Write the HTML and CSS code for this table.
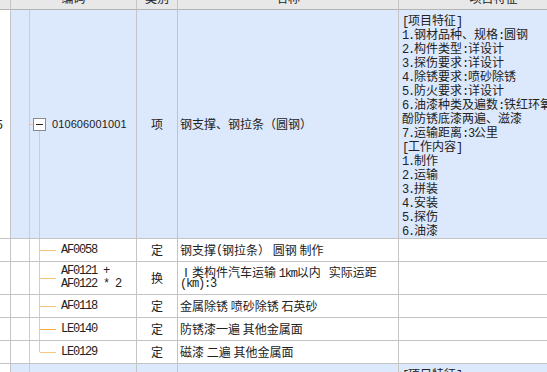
FILE: index.html
```html
<!DOCTYPE html>
<html lang="zh-CN">
<head>
<meta charset="utf-8">
<title>清单</title>
<link rel="stylesheet" href="styles.css">
</head>
<body>
<div class="sheet">
  <div class="c hd"></div>
  <div class="c hd">编码</div>
  <div class="c hd">类别</div>
  <div class="c hd">名称</div>
  <div class="c hd">项目特征</div>

  <div class="c num">5</div>
  <div class="c code code-main bl"><span class="toggle"><span class="minus"></span></span><span class="qd">010606001001</span></div>
  <div class="c type bl">项</div>
  <div class="c name bl">钢支撑、钢拉条（圆钢）</div>
  <div class="c feat bl">
    <div class="ln"><span class="en">[</span>项目特征<span class="en">]</span></div>
    <div class="ln"><span class="en">1.</span>钢材品种、规格<span class="en">:</span>圆钢</div>
    <div class="ln"><span class="en">2.</span>构件类型<span class="en">:</span>详设计</div>
    <div class="ln"><span class="en">3.</span>探伤要求<span class="en">:</span>详设计</div>
    <div class="ln"><span class="en">4.</span>除锈要求<span class="en">:</span>喷砂除锈</div>
    <div class="ln"><span class="en">5.</span>防火要求<span class="en">:</span>详设计</div>
    <div class="ln"><span class="en">6.</span>油漆种类及遍数<span class="en">:</span>铁红环氧</div>
    <div class="ln">酚防锈底漆两遍、滋漆</div>
    <div class="ln"><span class="en">7.</span>运输距离<span class="en">:3</span>公里</div>
    <div class="ln"><span class="en">[</span>工作内容<span class="en">]</span></div>
    <div class="ln"><span class="en">1.</span>制作</div>
    <div class="ln"><span class="en">2.</span>运输</div>
    <div class="ln"><span class="en">3.</span>拼装</div>
    <div class="ln"><span class="en">4.</span>安装</div>
    <div class="ln"><span class="en">5.</span>探伤</div>
    <div class="ln"><span class="en">6.</span>油漆</div>
  </div>

  <div class="c num"></div>
  <div class="c code code-sub"><span class="en">AF0058</span></div>
  <div class="c type">定</div>
  <div class="c name">钢支撑<span class="en">(</span>钢拉条） 圆钢 制作</div>
  <div class="c feat"></div>

  <div class="c num"></div>
  <div class="c code code-sub two"><span class="ln2 en">AF0121 +</span><span class="ln2 en">AF0122 * 2</span></div>
  <div class="c type">换</div>
  <div class="c name two"><span class="ln2">Ⅰ类构件汽车运输 <span class="en">1km</span>以内&nbsp;&nbsp;&nbsp;实际运距</span><span class="ln2 en">(km):3</span></div>
  <div class="c feat"></div>

  <div class="c num"></div>
  <div class="c code code-sub"><span class="en">AF0118</span></div>
  <div class="c type">定</div>
  <div class="c name">金属除锈 喷砂除锈 石英砂</div>
  <div class="c feat"></div>

  <div class="c num"></div>
  <div class="c code code-sub hot"><span class="en">LE0140</span></div>
  <div class="c type">定</div>
  <div class="c name">防锈漆一遍 其他金属面</div>
  <div class="c feat"></div>

  <div class="c num"></div>
  <div class="c code code-sub last"><span class="en">LE0129</span></div>
  <div class="c type">定</div>
  <div class="c name">磁漆 二遍 其他金属面</div>
  <div class="c feat"></div>

  <div class="c num"></div>
  <div class="c code code-next bl"></div>
  <div class="c type bl"></div>
  <div class="c name bl"></div>
  <div class="c feat bl"><div class="ln"><span class="en">[</span>项目特征<span class="en">]</span></div></div>
</div>
</body>
</html>
```

FILE: styles.css
```css
html, body {
  margin: 0;
  padding: 0;
  background: #ffffff;
  overflow: hidden;
}

body {
  font-family: "Noto Sans CJK SC", "Noto Sans", sans-serif;
  font-size: 12px;
  color: #222222;
}

.sheet {
  display: grid;
  grid-template-columns: 11px 126px 41px 221px 190px;
  grid-template-rows: 24px 229px 23px 33px 23px 23px 23px 30px;
  width: 612px;
  margin-top: -14px;
}

.c {
  box-sizing: border-box;
  border-right: 1px solid #c4c4c4;
  border-bottom: 1px solid #c4c4c4;
  background: #ffffff;
  white-space: nowrap;
  overflow: hidden;
  line-height: 14px;
}

.hd {
  background: #e8e8e8;
  border-bottom-color: #b4b4b4;
  display: flex;
  align-items: center;
  justify-content: center;
}

.bl {
  background: #dce8fc;
}

.en {
  font-family: "Liberation Mono", monospace;
  letter-spacing: -1.2px;
}

.num {
  display: flex;
  align-items: center;
  justify-content: flex-end;
  padding-right: 7px;
  overflow: visible;
}

.code {
  display: flex;
  align-items: center;
}

.code-main {
  padding-left: 22px;
  background:
    linear-gradient(#f7c67f, #f7c67f) 18px 0 / 1px 100% no-repeat,
    linear-gradient(#f7c67f, #f7c67f) 18px 50% / 4px 1px no-repeat,
    linear-gradient(#f7c67f, #f7c67f) 28px 100% / 1px calc(50% - 6px) no-repeat,
    #dce8fc;
}

.toggle {
  box-sizing: border-box;
  width: 13px;
  height: 13px;
  border: 1px solid #8a8a8a;
  background: #ffffff;
  display: flex;
  align-items: center;
  justify-content: center;
}

.minus {
  width: 7px;
  height: 1px;
  background: #222222;
}

.qd {
  margin-left: 6px;
  font-family: "Liberation Sans", Arial, sans-serif;
  font-size: 11px;
  letter-spacing: 0.1px;
}

.code-sub {
  padding-left: 50px;
  background:
    linear-gradient(#f7c67f, #f7c67f) 18px 0 / 1px 100% no-repeat,
    linear-gradient(#f7c67f, #f7c67f) 28px 0 / 1px 100% no-repeat,
    linear-gradient(#f7c67f, #f7c67f) 29px 50% / 16px 1px no-repeat,
    #ffffff;
}

.code-sub.hot {
  background:
    linear-gradient(#f7c67f, #f7c67f) 18px 0 / 1px 100% no-repeat,
    linear-gradient(#f7c67f, #f7c67f) 28px 0 / 1px 100% no-repeat,
    linear-gradient(#f3b04a, #f3b04a) 29px 50% / 16px 1px no-repeat,
    #ffffff;
}

.code-sub.last {
  background:
    linear-gradient(#f7c67f, #f7c67f) 18px 0 / 1px 100% no-repeat,
    linear-gradient(#f7c67f, #f7c67f) 28px 0 / 1px 50% no-repeat,
    linear-gradient(#f7c67f, #f7c67f) 29px 50% / 16px 1px no-repeat,
    #ffffff;
}

.code-next {
  background:
    linear-gradient(#f7c67f, #f7c67f) 18px 0 / 1px 100% no-repeat,
    #dce8fc;
}

.type {
  display: flex;
  align-items: center;
  justify-content: center;
}

.name {
  display: flex;
  align-items: center;
  padding-left: 2px;
}

.c.two {
  flex-direction: column;
  align-items: flex-start;
  justify-content: center;
}

.ln2 {
  display: block;
  height: 13px;
  line-height: 13px;
}

.feat {
  padding: 3px 0 0 3px;
}

.ln {
  height: 14px;
  line-height: 14px;
}
```
